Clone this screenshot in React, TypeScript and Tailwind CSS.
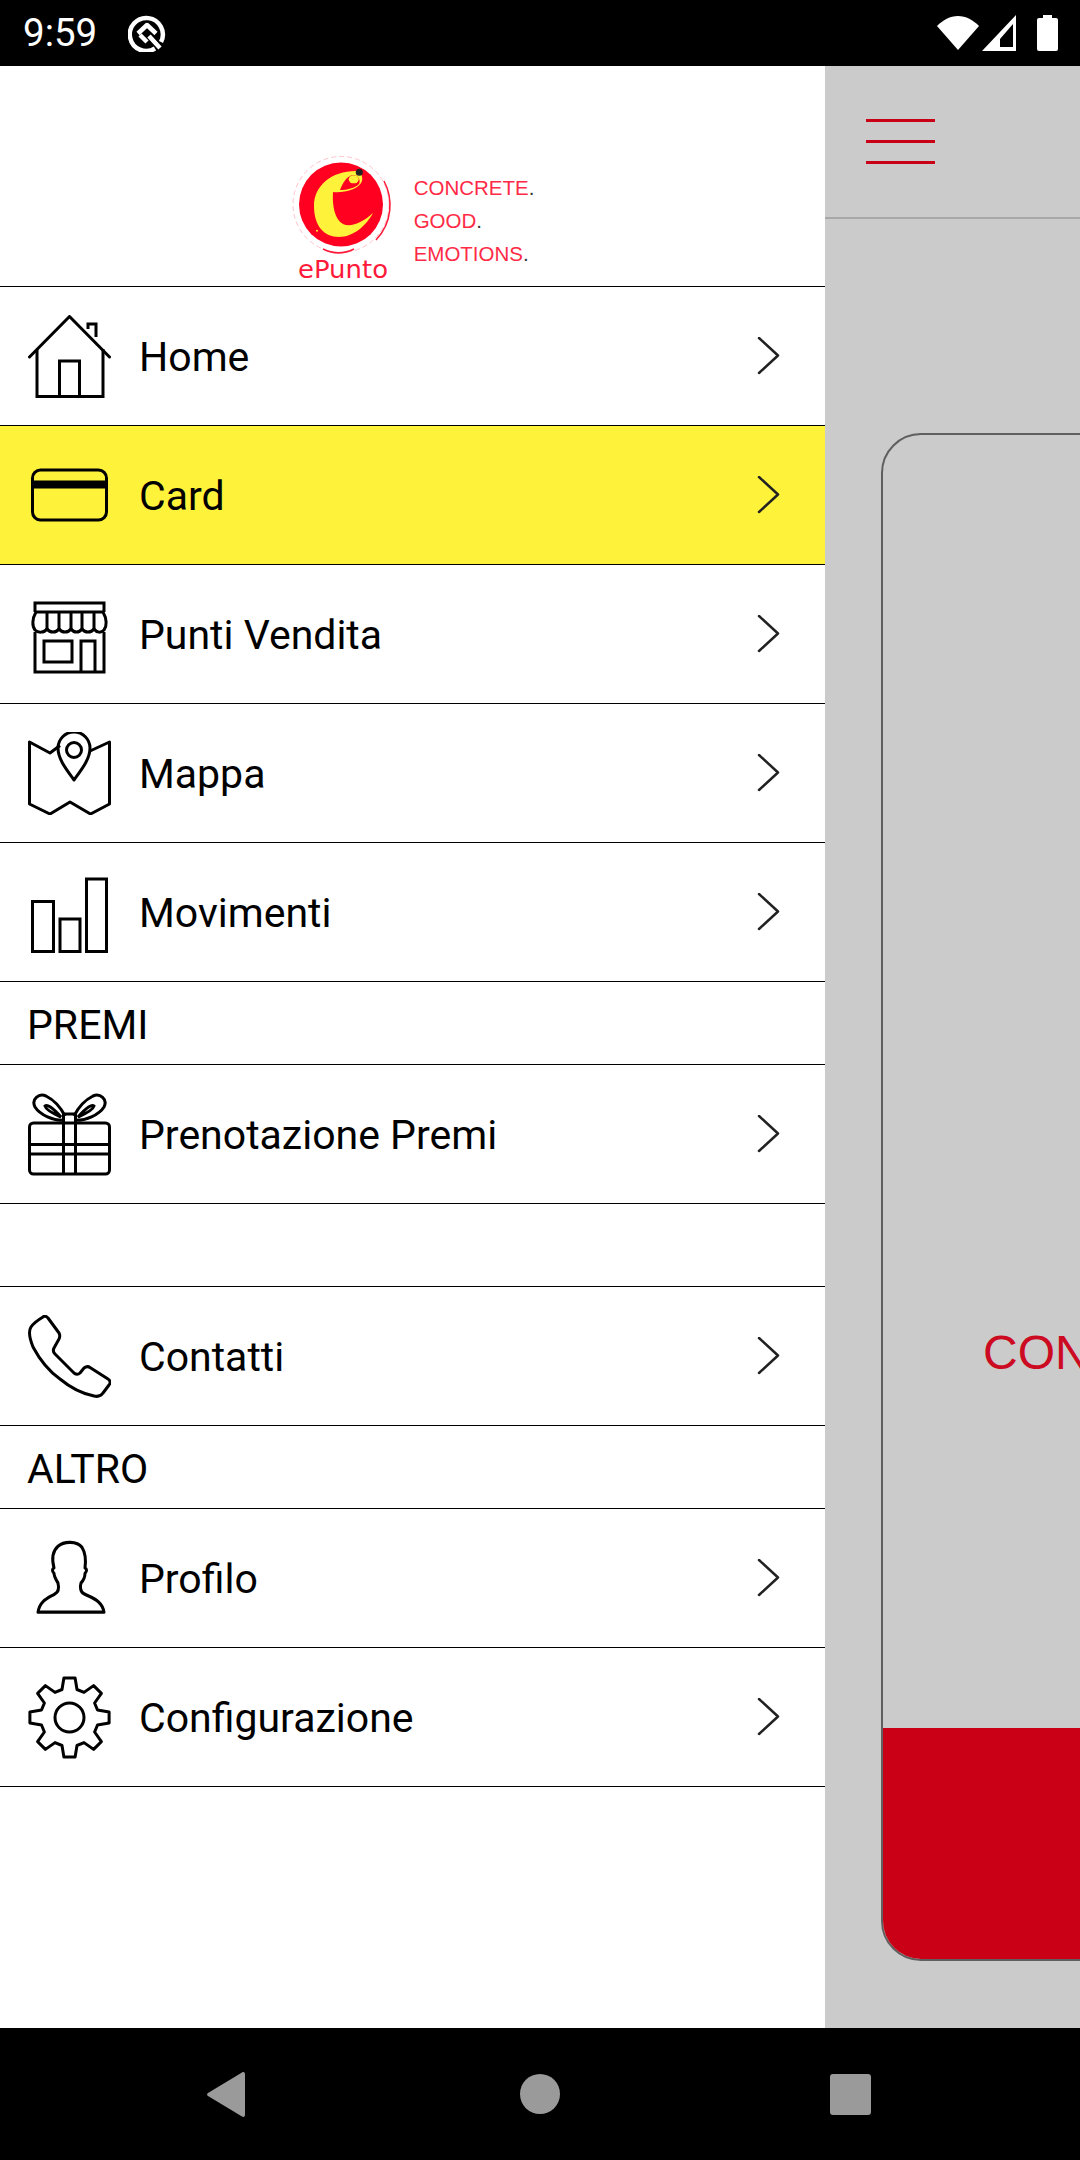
import type { ReactNode } from "react";

const iconClass = "h-[83px] w-[83px] shrink-0 fill-none stroke-black stroke-[3]";

function HomeIcon() {
  return (
    <svg viewBox="0 0 83 83" className={iconClass}>
      <path d="M1.500 42 41.500 1.500 81.500 42" strokeLinecap="round" strokeLinejoin="round" />
      <path d="M9 34v47.500h66V34" />
      <path d="M31.500 81V46h20v35" />
      <path d="M60 14V9h8v13" />
    </svg>
  );
}

function CardIcon() {
  return (
    <svg viewBox="0 0 83 83" className={iconClass}>
      <rect x="4.500" y="16" width="74" height="50" rx="8" />
      <path d="M4 30.500h75" className="stroke-[8]" />
    </svg>
  );
}

function StoreIcon() {
  return (
    <svg viewBox="0 0 83 83" className={iconClass}>
      <path d="M7 19v-9h69v9" />
      <path d="M7 39v40h69V39" />
      <path d="M8 19h67c4 7 4 14 1 18-3 3-7 3-10-1-3 4-9 4-12 0-3 4-8 4-11 0-3 4-9 4-12 0-3 4-9 4-12 0-3 4-9 4-12 1-3-4-3-11 1-18Z" />
      <path d="M19 19v17M31 19v17M43 19v17M54 19v17M66 19v17" />
      <path d="M16 48h28v21H16ZM53 79V48h14v31" />
    </svg>
  );
}

function MapIcon() {
  return (
    <svg viewBox="0 0 83 83" className={iconClass}>
      <path d="M32 13.500 22 21 1.500 10v62L22 82l20-12 20.500 12 19-10V10L62 19" strokeLinejoin="round" />
      <path d="M46 48C38 37 30 27 30 16a16 16 0 0 1 32 0c0 11-8 21-16 32Z" strokeLinejoin="round" />
      <circle cx="46" cy="18" r="7.500" />
    </svg>
  );
}

function BarsIcon() {
  return (
    <svg viewBox="0 0 83 83" className={iconClass}>
      <path d="M4.500 30.500h21v50h-21ZM32 48h20v32.500H32ZM58.500 8h20v72.500h-20Z" />
    </svg>
  );
}

function GiftIcon() {
  return (
    <svg viewBox="0 0 83 83" className={iconClass}>
      <rect x="1.500" y="30" width="80" height="51" rx="4" />
      <path d="M1 51.500h81M1 61h81M35.500 81V21h12v60" />
      <path d="M35 27C26 28 12 22 7 14 3 6 11 0 18 3c8 4 15 12 19 20" />
      <path d="M48 27c9 1 23-5 28-13 4-8-4-14-11-11-8 4-15 12-19 20" />
      <path d="M33 24c-7-3-15-7-16-11 2-2 7 1 16 11ZM50 24c7-3 15-7 16-11-2-2-7 1-16 11Z" />
    </svg>
  );
}

function PhoneIcon() {
  return (
    <svg viewBox="0 0 83 83" className={iconClass}>
      <path
        d="M15 2C10 5 5 9 3 12c-2 3-2 10 2 20 8 15 17 25 27 32 12 10 24 15 34 17 4 1 7 0 9-3l6-8c2-2 1-5-1-6L62 52.500c-2-1.500-4-1-6 .5l-4 5c-2 2-4 1.500-6 0L27 39c-2-2-2-4-1-6l5-9c1-2 1-4 0-6L20 3c-2-2-4-2-5-1Z"
        strokeLinejoin="round"
      />
    </svg>
  );
}

function PersonIcon() {
  return (
    <svg viewBox="0 0 83 83" className={iconClass}>
      <path
        transform="translate(0 -1.500) scale(1 1.080)"
        d="M10 71H76C74 60 64 58 56 54c-4-2-4-7-3-10 3-3 4-7 4-9 2-2 2-4 0-5 1-7 1-13-3-19-5-6-18-6-24-1-6 5-6 13-4 20-2 1-2 3 0 5 0 3 2 6 4 9 1 4 1 8-3 10-7 4-15 6-17 17Z"
        strokeLinejoin="round"
      />
    </svg>
  );
}

function GearIcon() {
  // eight teeth round the wheel
  const teeth = [0, 45, 90, 135, 180, 225, 270, 315];
  const outer = teeth
    .map((a) => {
      const p = (deg: number, r: number) => {
        const t = ((a + deg - 90) * Math.PI) / 180;
        return `${(41.5 + r * Math.cos(t)).toFixed(1)} ${(41.5 + r * Math.sin(t)).toFixed(1)}`;
      };
      return `L${p(-15, 29)} L${p(-8, 40)} L${p(8, 40)} L${p(15, 29)}`;
    })
    .join(" ");
  return (
    <svg viewBox="0 0 83 83" className={iconClass}>
      <path d={"M" + outer.slice(1) + " Z"} strokeLinejoin="round" />
      <circle cx="41.500" cy="41.500" r="14.500" />
    </svg>
  );
}

function Chevron() {
  return (
    <svg viewBox="0 0 24 38" className="h-[38px] w-[24px] shrink-0 fill-none stroke-[#222] stroke-[2.500]">
      <path d="M3 1l19 17.500L3 36" strokeLinecap="round" strokeLinejoin="round" />
    </svg>
  );
}

function MenuRow({ icon, label, active }: { icon: ReactNode; label: string; active?: boolean }) {
  return (
    <div
      className={
        "flex h-[139px] items-center border-b border-black pl-7 pr-[45px] " + (active ? "bg-[#fff23a]" : "")
      }
    >
      {icon}
      <span className="ml-[28px] flex-1 pt-[3px] text-[41px] text-black">{label}</span>
      <Chevron />
    </div>
  );
}

function SectionRow({ label }: { label?: string }) {
  return (
    <div className="flex h-[83px] items-center border-b border-black pl-[27px] pt-[5px] text-[41px] text-black">
      {label}
    </div>
  );
}

function Logo() {
  return (
    <div className="flex items-end">
      <svg viewBox="0 0 102 131" className="h-[131px] w-[102px]">
        <circle cx="50" cy="50.500" r="48" fill="none" stroke="#ffc4cc" strokeWidth="1" strokeDasharray="5 3" />
        <path d="M93 27c9 17 9 41-8 59" fill="none" stroke="#ff1a3a" strokeWidth="1.500" />
        <path d="M32 95c10 5 21 5 31 0" fill="none" stroke="#ff1a3a" strokeWidth="1.500" />
        <circle cx="50" cy="50.500" r="42" fill="#ff0020" />
        <path
          d="M65 17C40 17 23 32 23 52c0 20 10 31 25 31 14 0 27-11 34-24-10 9-22 15-30 11-8-4-11-18-10-32 10 1 26-2 29-11 1-5-1-9-6-10Z"
          fill="#fff23a"
        />
        <path d="M49 36c3-8 7-14 13-15 5 0 8 5 6 9-4 4-12 6-19 6Z" fill="#ff0020" />
        <ellipse cx="62.700" cy="25.300" rx="5" ry="4" fill="#fff23a" />
        <circle cx="68.300" cy="18.300" r="3.500" fill="#222" />
        <circle cx="26" cy="76.700" r="1" fill="#fff23a" />
        <text
          x="7"
          y="124"
          fontFamily="'DejaVu Sans', sans-serif"
          fontSize="25"
          fill="#ff1a3a"
          textLength="90"
          lengthAdjust="spacingAndGlyphs"
        >
          ePunto
        </text>
      </svg>
      <div className="mb-[20px] ml-[21px] flex flex-col gap-[10.200px] font-['Liberation_Sans',sans-serif] text-[20.500px] leading-[22.500px] text-[#ff2a45]">
        <span>
          CONCRETE<span className="text-[#333]">.</span>
        </span>
        <span>
          GOOD<span className="text-[#333]">.</span>
        </span>
        <span>
          EMOTIONS<span className="text-[#333]">.</span>
        </span>
      </div>
    </div>
  );
}

function StatusBar() {
  return (
    <div className="flex h-[66px] items-center bg-black pl-[23px] pr-[22px] text-white">
      <span className="font-['Roboto',sans-serif] text-[38.500px] leading-none">9:59</span>
      <svg viewBox="0 0 38 38" className="ml-[31px] h-[38px] w-[38px] fill-none stroke-white">
        <path d="M27 34.500A16.500 16.500 0 1 1 33 28" strokeWidth="4.500" />
        <path d="M10 19.500 19 11l9 8.500" strokeWidth="4.500" strokeLinejoin="round" />
        <path d="M12 21 19 28M21 22 32 34" strokeWidth="4.500" />
      </svg>
      <div className="flex-1" />
      <svg viewBox="0 0 42 36" className="h-[36px] w-[42px] fill-white">
        <path d="M21 35 0 11C6 5 13 1 21 1s15 4 21 10Z" />
      </svg>
      <svg viewBox="0 0 35 36" className="ml-[3px] h-[36px] w-[35px] fill-white">
        <path d="M34 0v36H0ZM31 9 18 24v8h13Z" fillRule="evenodd" />
      </svg>
      <svg viewBox="0 0 21 36" className="ml-[20px] h-[36px] w-[21px] fill-white">
        <path d="M6 0h9v3h4a2 2 0 0 1 2 2v29a2 2 0 0 1-2 2H2a2 2 0 0 1-2-2V5a2 2 0 0 1 2-2h4Z" />
      </svg>
    </div>
  );
}

function NavBar() {
  return (
    <div className="flex h-[132px] items-center bg-black pl-[207px]">
      <svg viewBox="0 0 38 45" className="h-[45px] w-[38px] fill-[#9a9a9a]">
        <path d="M35 .5c2-1 3 0 3 2v40c0 2-1 3-3 2L1 24c-1.300-1-1.300-2 0-3Z" />
      </svg>
      <div className="ml-[275px] h-[40px] w-[40px] rounded-full bg-[#9a9a9a]" />
      <div className="ml-[270px] h-[41px] w-[41px] rounded-[3px] bg-[#9a9a9a]" />
    </div>
  );
}

export default function App() {
  return (
    <div className="flex h-[2160px] w-[1080px] flex-col overflow-hidden bg-black font-['Roboto',sans-serif]">
      <StatusBar />
      <div className="flex min-h-0 flex-1">
        {/* Drawer */}
        <div className="w-[825px] shrink-0 bg-white">
          <div className="flex h-[221px] items-end justify-center border-b border-black pb-[1px]">
            <Logo />
          </div>
          <MenuRow icon={<HomeIcon />} label="Home" />
          <MenuRow icon={<CardIcon />} label="Card" active />
          <MenuRow icon={<StoreIcon />} label="Punti Vendita" />
          <MenuRow icon={<MapIcon />} label="Mappa" />
          <MenuRow icon={<BarsIcon />} label="Movimenti" />
          <SectionRow label="PREMI" />
          <MenuRow icon={<GiftIcon />} label="Prenotazione Premi" />
          <SectionRow />
          <MenuRow icon={<PhoneIcon />} label="Contatti" />
          <SectionRow label="ALTRO" />
          <MenuRow icon={<PersonIcon />} label="Profilo" />
          <MenuRow icon={<GearIcon />} label="Configurazione" />
        </div>

        {/* Dimmed page behind the drawer */}
        <div className="flex min-w-0 flex-1 flex-col overflow-hidden bg-[#cbcbcb]">
          <div className="flex h-[153px] shrink-0 flex-col gap-[18px] border-b-2 border-[#a8a8a8] pl-[41px] pt-[53px]">
            <div className="h-[3px] w-[69px] bg-[#c90016]" />
            <div className="h-[3px] w-[69px] bg-[#c90016]" />
            <div className="h-[3px] w-[69px] bg-[#c90016]" />
          </div>
          <div className="pl-[56px] pt-[214px]">
            <div className="flex h-[1528px] w-[500px] flex-col overflow-hidden rounded-[40px] border-2 border-[#5f5f5f]">
              <div className="flex-1 pl-[100px] pt-[888px] font-['Liberation_Sans',sans-serif] text-[48px] leading-[60px] text-[#cc0a22]">
                CON
              </div>
              <div className="h-[231px] bg-[#c90016]" />
            </div>
          </div>
        </div>
      </div>
      <NavBar />
    </div>
  );
}
